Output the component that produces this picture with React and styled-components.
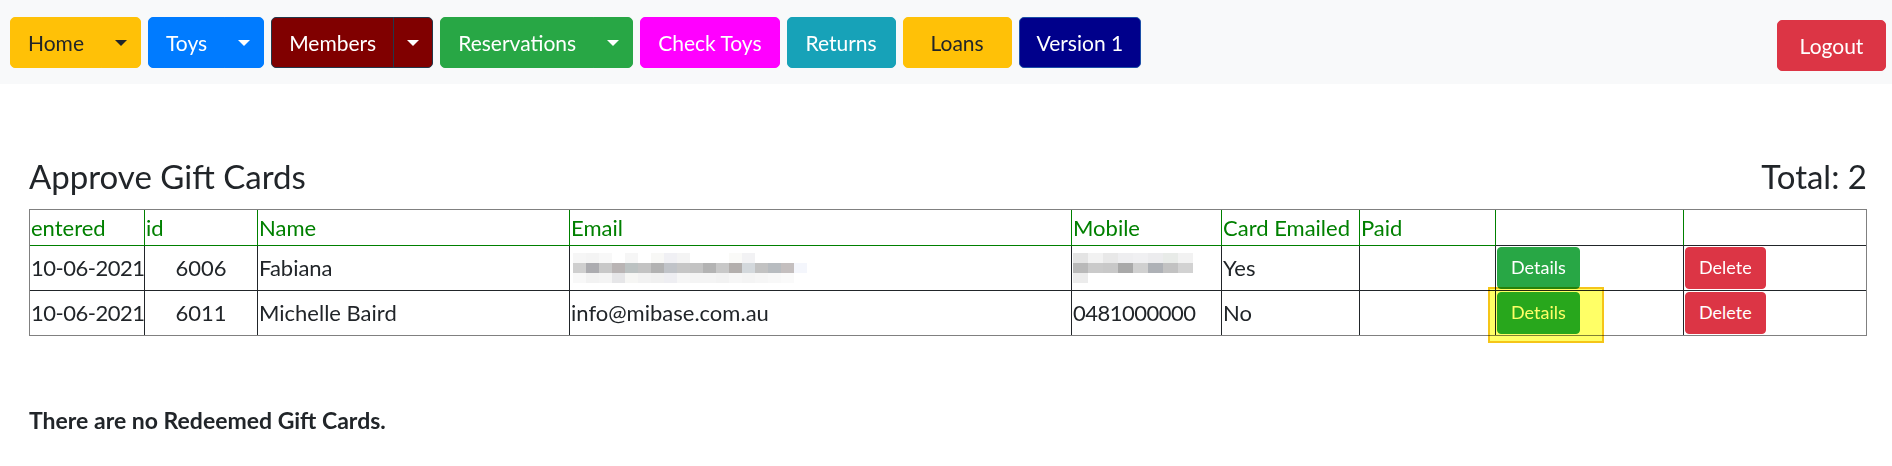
import React from 'react';
import styled, { createGlobalStyle } from 'styled-components';

const GlobalStyle = createGlobalStyle`
    * { box-sizing: border-box; }
    html, body {
        margin: 0;
        padding: 0;
        background: #fff;
    }
    body {
        font-family: Lato, "Open Sans", sans-serif;
        font-size: 17.6px;
        line-height: 1.5;
        color: #212529;
    }
`

const NavBar = styled.nav`
    display: flex;
    align-items: flex-start;
    height: 84px;
    padding: 17px 6px 0 10px;
    background-color: #f8f9fa;
`

const NavLinks = styled.div`
    display: flex;
    gap: 7px;
`

const BtnGroup = styled.div`
    display: inline-flex;
`

const NavBtn = styled.button`
    display: inline-flex;
    align-items: center;
    justify-content: center;
    height: 51px;
    min-width: ${p => (p.$minWidth ? p.$minWidth + 'px' : '0')};
    padding: 0 ${p => (p.$toggle ? '13px' : '17px')};
    margin-left: ${p => (p.$toggle ? '-1px' : '0')};
    font-family: inherit;
    font-size: 21px;
    line-height: 33px;
    color: ${p => p.$fg || '#fff'};
    background-color: ${p => p.$bg};
    border: 1px solid ${p => p.$border || p.$bg};
    border-radius: ${p => (p.$split ? '5px 0 0 5px' : p.$toggle ? '0 5px 5px 0' : '5px')};
    cursor: pointer;
`

const Caret = styled.span`
    display: inline-block;
    width: 0;
    height: 0;
    border-top: 6.6px solid currentColor;
    border-left: 6.6px solid transparent;
    border-right: 6.6px solid transparent;
`

const LogoutBtn = styled(NavBtn)`
    margin-left: auto;
    margin-top: 3px;
`

const Main = styled.main`
    padding: 0 25px 0 29px;
`

const TitleRow = styled.div`
    display: flex;
    justify-content: space-between;
    align-items: baseline;
    margin-top: 73px;
    margin-bottom: 12px;
`

const Title = styled.h2`
    margin: 0;
    font-size: 33px;
    font-weight: 400;
    line-height: 1.2;
`

const Table = styled.table`
    width: 100%;
    table-layout: fixed;
    border-collapse: separate;
    border-spacing: 0;
    border: 1px solid #808080;
    font-size: 22px;
    line-height: 1.5;
`

const Th = styled.th`
    padding: 1px;
    text-align: left;
    font-weight: 400;
    color: #008000;
    border-right: 1px solid #008000;
    border-bottom: 1px solid ${p => (p.$dark ? '#212529' : '#008000')};
    &:last-child { border-right: none; }
`

const Td = styled.td`
    position: relative;
    padding: 1px;
    text-align: ${p => (p.$center ? 'center' : 'left')};
    letter-spacing: ${p => (p.$numeric ? '-0.5px' : 'normal')};
    vertical-align: middle;
    white-space: nowrap;
    border-right: 1px solid #212529;
    border-bottom: 1px solid #212529;
    &:last-child { border-right: none; }
    tr:last-child > & { border-bottom: none; }
`

const SmallBtn = styled.button`
    height: 42px;
    padding: 0 13px;
    font-family: inherit;
    font-size: 18px;
    line-height: 26.4px;
    color: #fff;
    background-color: ${p => p.$bg};
    border: 1px solid ${p => p.$bg};
    border-radius: 4px;
    cursor: pointer;
`

const Highlight = styled.span`
    position: absolute;
    left: -8px;
    top: -4px;
    width: 116px;
    height: 56px;
    background-color: #ffff66;
    border: 2px solid #f5c518;
    mix-blend-mode: multiply;
    pointer-events: none;
`

const Blur = styled.div`
    display: grid;
    grid-template-columns: repeat(${p => p.$cols}, ${p => p.$size}px);
    grid-auto-rows: 10px;
    margin-left: ${p => p.$offset || 0}px;
`

const Pix = styled.span`
    background-color: ${p => p.$c};
`

const EmptyNote = styled.h5`
    margin: 71px 0 0;
    font-size: 23px;
    font-weight: 700;
    line-height: 1.2;
`

const navItems = [
    { label: 'Home', bg: '#ffc107', fg: '#212529', split: true },
    { label: 'Toys', bg: '#007bff', split: true },
    { label: 'Members', bg: '#800000', border: '#22384a', split: true },
    { label: 'Reservations', bg: '#28a745', split: true },
    { label: 'Check Toys', bg: '#ff00ff' },
    { label: 'Returns', bg: '#17a2b8', minWidth: 109 },
    { label: 'Loans', bg: '#ffc107', fg: '#212529', minWidth: 109 },
    { label: 'Version 1', bg: '#00008b', border: '#1c4fa8' },
]

const columns = [
    { label: 'entered', width: 115 },
    { label: 'id', width: 113 },
    { label: 'Name', width: 312 },
    { label: 'Email', width: 502 },
    { label: 'Mobile', width: 150 },
    { label: 'Card Emailed', width: 138 },
    { label: 'Paid', width: 136 },
    { label: '', width: 188, dark: true },
    { label: '', dark: true },
]

const emailBlur = [
    ['#f6f6f6', '#f4f4f4', '#f8f8f8', '#fff', '#f6f6f6', '#fff', '#f8f8f6', '#f0f0f4', '#f4f4f4', '#fff', '#fff', '#fff', '#fafaf8', '#f2f2f4', '#fff', '#fff', '#fff', '#fff'],
    ['#cfcfcf', '#acacb0', '#c8c8c8', '#b9b4b4', '#bcc2c2', '#c3c3c3', '#b2b2b2', '#c0c3c8', '#c6c6c6', '#c3c3c3', '#b3b3b3', '#c8c8c8', '#b3afad', '#d3d8dc', '#c2c2c2', '#b8bcc0', '#c4bfbf', '#f4f6fc'],
    ['#f8f8f8', '#f2f2f2', '#f4f4f4', '#e6e6e8', '#f6f6f4', '#f2f2f2', '#f0f0f0', '#eeeef2', '#f6f6f6', '#f4f4f4', '#f4f4f4', '#f2f2f2', '#f6f6f6', '#f4f4f4', '#f6f6f6', '#f8f8f8', '#fafafa', '#fff'],
]

const mobileBlur = [
    ['#e4e4e4', '#f2f2f2', '#e8e8e8', '#eeeef0', '#f0f0f2', '#ececee', '#e8ebe8', '#f2f2f2'],
    ['#b9b9b9', '#cacaca', '#c8c8c8', '#a9a9a9', '#d0d0d0', '#aeb1b6', '#c2c2c2', '#d2d2d2'],
    ['#ececec', '#fff', '#fff', '#fff', '#fff', '#fff', '#fff', '#fff'],
]

const PixelBlur = ({ rows, size, offset }) => (
    <Blur $cols={rows[0].length} $size={size} $offset={offset}>
        {rows.map((row, r) => row.map((c, i) => <Pix key={r + '-' + i} $c={c} />))}
    </Blur>
)

const cards = [
    { entered: '10-06-2021', id: 6006, name: 'Fabiana', email: null, mobile: null, emailed: 'Yes', paid: '' },
    { entered: '10-06-2021', id: 6011, name: 'Michelle Baird', email: 'info@mibase.com.au', mobile: '0481000000', emailed: 'No', paid: '', highlight: true },
]

class App extends React.Component {
    render() {
        return (
            <div>
                <GlobalStyle />
                <NavBar>
                    <NavLinks>
                        {navItems.map(item => (
                            item.split ? (
                                <BtnGroup key={item.label}>
                                    <NavBtn $split $bg={item.bg} $fg={item.fg} $border={item.border}>{item.label}</NavBtn>
                                    <NavBtn $toggle $bg={item.bg} $fg={item.fg} $border={item.border}><Caret /></NavBtn>
                                </BtnGroup>
                            ) : (
                                <NavBtn key={item.label} $bg={item.bg} $fg={item.fg} $border={item.border} $minWidth={item.minWidth}>{item.label}</NavBtn>
                            )
                        ))}
                    </NavLinks>
                    <LogoutBtn $bg="#dc3545" $minWidth={109}>Logout</LogoutBtn>
                </NavBar>
                <Main>
                    <TitleRow>
                        <Title>Approve Gift Cards</Title>
                        <Title>Total: 2</Title>
                    </TitleRow>
                    <Table>
                        <colgroup>
                            {columns.map((col, i) => (
                                <col key={i} style={col.width ? { width: col.width } : undefined} />
                            ))}
                        </colgroup>
                        <thead>
                            <tr>
                                {columns.map((col, i) => (
                                    <Th key={i} $dark={col.dark}>{col.label}</Th>
                                ))}
                            </tr>
                        </thead>
                        <tbody>
                            {cards.map(card => (
                                <tr key={card.id}>
                                    <Td $numeric>{card.entered}</Td>
                                    <Td $center>{card.id}</Td>
                                    <Td>{card.name}</Td>
                                    <Td>{card.email || <PixelBlur rows={emailBlur} size={13} offset={2} />}</Td>
                                    <Td $numeric>{card.mobile || <PixelBlur rows={mobileBlur} size={15} />}</Td>
                                    <Td>{card.emailed}</Td>
                                    <Td>{card.paid}</Td>
                                    <Td>
                                        <SmallBtn $bg="#28a745">Details</SmallBtn>
                                        {card.highlight && <Highlight />}
                                    </Td>
                                    <Td>
                                        <SmallBtn $bg="#dc3545">Delete</SmallBtn>
                                    </Td>
                                </tr>
                            ))}
                        </tbody>
                    </Table>
                    <EmptyNote>There are no Redeemed Gift Cards.</EmptyNote>
                </Main>
            </div>
        )
    }
}

export default App;
